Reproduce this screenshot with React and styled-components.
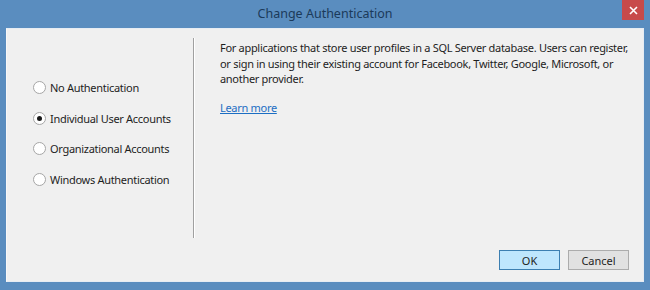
import React from "react";
import styled, { createGlobalStyle } from "styled-components";

const Global = createGlobalStyle`
  html, body { margin: 0; padding: 0; }
  body { width: 650px; height: 290px; overflow: hidden; background: #5b8dbf; }
`;

const Frame = styled.div`
  width: 650px;
  height: 290px;
  box-sizing: border-box;
  background: #5a8dbf;
  display: flex;
  flex-direction: column;
  padding: 0 6px 8px 6px;
  font-family: "Noto Sans", "Open Sans", sans-serif;
`;

const TitleBar = styled.div`
  height: 28px;
  position: relative;
  display: flex;
  align-items: center;
  justify-content: center;
  color: #1b3a5a;
  font-size: 12.5px;
  padding-bottom: 1px;
  box-sizing: border-box;
`;

const CloseBtn = styled.div`
  position: absolute;
  right: 0;
  top: 0;
  width: 22px;
  height: 20px;
  background: #c84a4a;
  display: flex;
  align-items: center;
  justify-content: center;
`;

const Body = styled.div`
  flex: 1;
  background: #f0f0f0;
  border: 1px solid #e6ecf3;
  border-left-color: #f8f8f8;
  display: flex;
  flex-direction: column;
  box-sizing: border-box;
`;

const Main = styled.div`
  display: flex;
  margin-top: 9px;
  height: 200px;
`;

const Options = styled.div`
  width: 186px;
  display: flex;
  flex-direction: column;
  padding: 34px 0 0 26px;
  box-sizing: border-box;
`;

const Option = styled.label`
  display: flex;
  align-items: center;
  height: 30.7px;
  font-size: 11px;
  letter-spacing: -0.3px;
  color: #1e1e1e;
  gap: 4px;
`;

const RadioCircle = styled.span`
  width: 11px;
  height: 11px;
  border-radius: 50%;
  border: 1px solid #a6a6a6;
  background: #fff;
  display: flex;
  align-items: center;
  justify-content: center;
  flex-shrink: 0;
  &::after {
    content: "";
    width: 5px;
    height: 5px;
    border-radius: 50%;
    background: ${(p) => (p.$checked ? "#1a1a1a" : "transparent")};
  }
`;

const Divider = styled.div`
  width: 1px;
  background: #a0a0a0;
  border-right: 1px solid #ffffff;
`;

const Description = styled.div`
  flex: 1;
  padding: 2px 10px 0 25px;
  font-size: 11px;
  letter-spacing: -0.3px;
  color: #1e1e1e;
  line-height: 15.5px;
  white-space: nowrap;
`;

const LinkText = styled.a`
  display: inline-block;
  margin-top: 13px;
  color: #1c6ec3;
  text-decoration: underline;
  cursor: pointer;
`;

const Footer = styled.div`
  display: flex;
  justify-content: flex-end;
  gap: 8px;
  padding: 12px 14px 0 0;
`;

const Button = styled.button`
  width: 61px;
  height: 20px;
  box-sizing: border-box;
  font-family: inherit;
  font-size: 11px;
  color: #1e1e1e;
  padding: 0;
  border: 1px solid ${(p) => (p.$primary ? "#3c7fb1" : "#acacac")};
  background: ${(p) => (p.$primary ? "#bee6fd" : "#e1e1e1")};
`;

const options = [
  { label: "No Authentication", checked: false },
  { label: "Individual User Accounts", checked: true },
  { label: "Organizational Accounts", checked: false },
  { label: "Windows Authentication", checked: false },
];

export default function App() {
  return (
    <>
      <Global />
      <Frame>
        <TitleBar>
          Change Authentication
          <CloseBtn>
            <svg width="9" height="9" viewBox="0 0 9 9">
              <path d="M1 1 L8 8 M8 1 L1 8" stroke="#fff" strokeWidth="1.6" />
            </svg>
          </CloseBtn>
        </TitleBar>
        <Body>
          <Main>
            <Options>
              {options.map((o) => (
                <Option key={o.label}>
                  <RadioCircle $checked={o.checked} />
                  {o.label}
                </Option>
              ))}
            </Options>
            <Divider />
            <Description>
              For applications that store user profiles in a SQL Server database. Users can register,
              <br />
              or sign in using their existing account for Facebook, Twitter, Google, Microsoft, or
              <br />
              another provider.
              <br />
              <LinkText>Learn more</LinkText>
            </Description>
          </Main>
          <Footer>
            <Button $primary>OK</Button>
            <Button>Cancel</Button>
          </Footer>
        </Body>
      </Frame>
    </>
  );
}
